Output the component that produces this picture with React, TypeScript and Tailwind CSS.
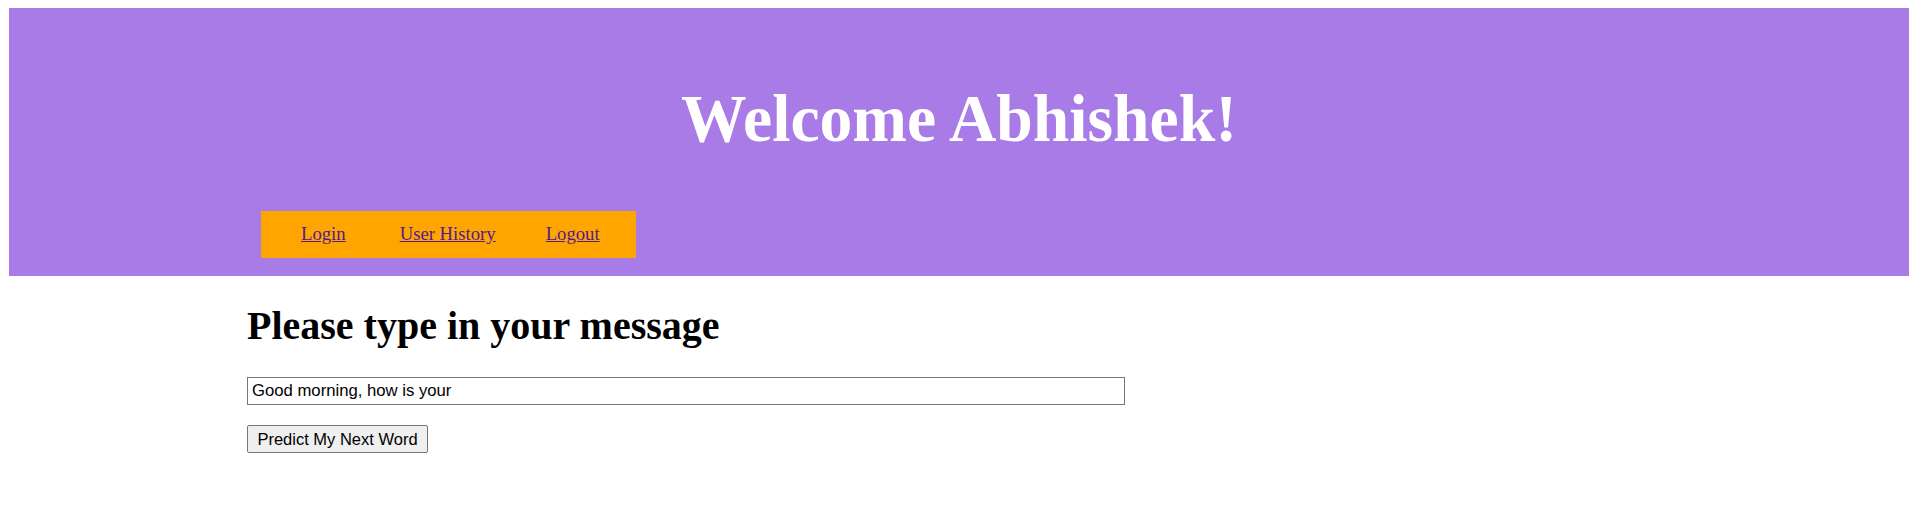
export default function App() {
  const links = [
    { label: 'Login', cls: '' },
    { label: 'User History', cls: 'ml-[54px]' },
    { label: 'Logout', cls: 'ml-[50px]' },
  ];

  return (
    <div className="min-h-[519px] bg-white">
      <header className="mt-[8px] ml-[9px] flex w-[1900px] flex-col bg-[#a87be6] pb-[18px]">
        <div className="flex justify-center pt-[76px]">
          <h1 className="inline-block scale-x-[0.965] font-['Liberation_Serif',serif] text-[68px] leading-none font-bold text-white">
            Welcome Abhishek!
          </h1>
        </div>
        <nav className="mt-[59px] ml-[252px] flex h-[47px] w-[375px] items-center bg-[#ffa500] pl-[40px] font-['Liberation_Serif',serif] text-[18.7px]">
          {links.map((l) => (
            <a key={l.label} href="#" className={`${l.cls} text-[#551a8b] underline`}>
              {l.label}
            </a>
          ))}
        </nav>
      </header>

      <main className="ml-[247px] flex flex-col items-start">
        <h2 className="mt-[30px] font-['Liberation_Serif',serif] text-[40px] leading-none font-bold text-black">
          Please type in your message
        </h2>
        <input
          type="text"
          defaultValue="Good morning, how is your"
          className="mt-[31px] h-[28px] w-[878px] border border-[#767676] bg-white px-[4px] font-['Liberation_Sans',sans-serif] text-[16.7px] text-black outline-none"
        />
        <button className="mt-[20px] h-[28px] w-[181px] rounded-[2px] border border-[#767676] bg-[#efefef] font-['Liberation_Sans',sans-serif] text-[16.5px] text-black">
          Predict My Next Word
        </button>
      </main>
    </div>
  );
}
